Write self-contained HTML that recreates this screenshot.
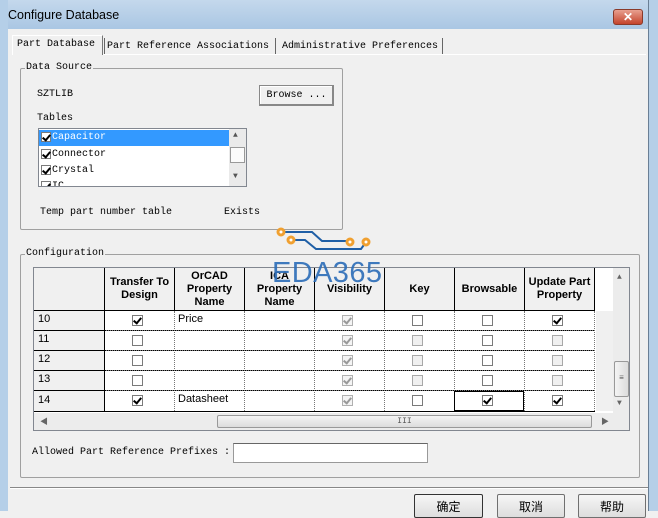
<!DOCTYPE html>
<html><head><meta charset="utf-8"><style>
*{box-sizing:border-box;margin:0;padding:0}
body{width:658px;height:511px;overflow:hidden;background:#f0f0f0;position:relative;font-family:"Liberation Mono","Noto Sans CJK SC",monospace;font-size:11px;color:#000}
.a{position:absolute}
.t{position:absolute;white-space:nowrap;font-family:"Liberation Mono",monospace;font-size:10px;letter-spacing:0px}
.grp{position:absolute;border:1px solid #a0a0a0;border-radius:2px}
.lbl{position:absolute;background:#f0f0f0;padding:0 1px;top:-7px;left:4px;font-family:"Liberation Mono",monospace;font-size:10px}
.cb{position:absolute;width:11px;height:11px;border:1px solid #7a7a7a;background:#fff}
.cb.k::after{content:"";position:absolute;left:2px;top:0px;width:3px;height:6px;border:solid #000;border-width:0 2px 2px 0;transform:rotate(40deg)}
.cb.g{border-color:#b0b0b0;background:#f4f4f4}
.cb.g::after{border-color:#999}
.cb.d{border-color:#a8a8a8;background:#f0f0f0}
.hd{position:absolute;top:0;height:43px;border-right:1px solid #000;border-bottom:1px solid #000;display:flex;align-items:center;justify-content:center;text-align:center;font-family:"Liberation Sans",sans-serif;font-weight:bold;font-size:11px;line-height:13px;background:#f0f0f0}
.sans{font-family:"Liberation Sans",sans-serif;font-size:11px}
.btn{position:absolute;border:1px solid #707070;border-radius:2px;background:linear-gradient(#f6f6f6,#dddddd);display:flex;align-items:center;justify-content:center;font-family:"Noto Sans CJK SC",sans-serif;font-size:12px}
</style></head><body>
<div class="a" style="left:0;top:0;width:658px;height:30px;background:linear-gradient(#c4d8ec,#a9c6e3)"></div>
<div class="a" style="left:0;top:0;width:8px;height:511px;background:#b5cfe8"></div>
<div class="a" style="left:648px;top:0;width:10px;height:511px;background:#b5cfe8;border-left:1px solid #6a7f95"></div>
<div class="a" style="left:8px;top:8px;font-family:'Liberation Sans',sans-serif;font-size:12.5px">Configure Database</div>
<div class="a" style="left:613px;top:9px;width:30px;height:16px;border:1px solid #8a3a2a;border-radius:3px;background:linear-gradient(#e8a090,#c4442c);color:#fff;font-family:'Liberation Sans',sans-serif;font-weight:bold;font-size:12px;text-align:center;line-height:14px">✕</div>
<div class="a" style="left:8px;top:29px;width:640px;height:482px;background:#f0f0f0"></div>
<div class="a" style="left:12px;top:54px;width:634px;height:1px;background:#fff"></div>
<div class="a" style="left:12px;top:35px;width:91px;height:20px;border:1px solid #fff;border-bottom:none;border-right:1px solid #777;background:#f0f0f0"></div>
<div class="t" style="left:17px;top:39px">Part Database</div>
<div class="a" style="left:104px;top:38px;width:1px;height:16px;background:#666"></div>
<div class="t" style="left:107px;top:41px">Part Reference Associations</div>
<div class="a" style="left:275px;top:38px;width:1px;height:16px;background:#666"></div>
<div class="t" style="left:282px;top:41px">Administrative Preferences</div>
<div class="a" style="left:442px;top:38px;width:1px;height:16px;background:#666"></div>
<div class="grp" style="left:20px;top:68px;width:323px;height:162px"><span class="lbl">Data Source</span></div>
<div class="t" style="left:37px;top:89px">SZTLIB</div>
<div class="btn" style="left:259px;top:85px;width:75px;height:21px;font-family:'Liberation Mono',monospace;font-size:10px;border-color:#888;border-radius:0;background:#f0f0f0;box-shadow:inset -1px -1px #888,inset 1px 1px #fff">Browse ...</div>
<div class="t" style="left:37px;top:113px">Tables</div>
<div class="a" style="left:38px;top:128px;width:209px;height:59px;border:1px solid #828790;background:#fff"></div>
<div class="a" style="left:39px;top:130px;width:190px;height:16px;background:#3399ff"></div>
<div class="a" style="left:229px;top:129px;width:17px;height:57px;background:#eaeaea"></div>
<div class="a" style="left:230px;top:147px;width:15px;height:16px;border:1px solid #999;background:#fbfbfb"></div>
<div class="a" style="left:233px;top:131px;font-size:8px;color:#555">▲</div>
<div class="a" style="left:233px;top:172px;font-size:8px;color:#555">▼</div>
<div class="cb k" style="left:41px;top:132px;width:10px;height:10px"></div>
<div class="t" style="left:52px;top:132px;color:#fff">Capacitor</div>
<div class="cb k" style="left:41px;top:149px;width:10px;height:10px"></div>
<div class="t" style="left:52px;top:149px">Connector</div>
<div class="cb k" style="left:41px;top:165px;width:10px;height:10px"></div>
<div class="t" style="left:52px;top:165px">Crystal</div>
<div class="a" style="left:39px;top:180px;width:190px;height:6px;overflow:hidden"><div class="cb k" style="left:2px;top:1px;width:10px;height:10px"></div><div class="t" style="left:13px;top:1px">IC</div></div>
<div class="t" style="left:40px;top:207px">Temp part number table</div>
<div class="t" style="left:224px;top:207px">Exists</div>
<div class="grp" style="left:20px;top:254px;width:620px;height:224px"><span class="lbl">Configuration</span></div>
<div class="a" style="left:33px;top:267px;width:597px;height:164px;border:1px solid #828790;background:#fff;overflow:hidden">
  <div class="hd" style="left:0;width:71px"></div>
  <div class="hd" style="left:71px;width:70px">Transfer To<br>Design</div>
  <div class="hd" style="left:141px;width:70px">OrCAD<br>Property<br>Name</div>
  <div class="hd" style="left:211px;width:70px">ICA<br>Property<br>Name</div>
  <div class="hd" style="left:281px;width:70px">Visibility</div>
  <div class="hd" style="left:351px;width:70px">Key</div>
  <div class="hd" style="left:421px;width:70px">Browsable</div>
  <div class="hd" style="left:491px;width:70px">Update Part<br>Property</div>
  <div class="a" style="left:0;top:43px;width:71px;height:100px;background:#f0f0f0;border-right:1px solid #000"></div>
  <div class="a" style="left:0;top:62px;width:561px;border-top:1px solid #000"></div>
  <div class="a" style="left:0;top:82px;width:561px;border-top:1px solid #000"></div>
  <div class="a" style="left:0;top:102px;width:561px;border-top:1px solid #000"></div>
  <div class="a" style="left:0;top:122px;width:561px;border-top:1px solid #000"></div>
  <div class="a" style="left:0;top:143px;width:561px;border-top:1px solid #000"></div>
  <div class="a" style="left:72px;top:62px;width:489px;border-top:1px dotted #777"></div>
  <div class="a" style="left:72px;top:82px;width:489px;border-top:1px dotted #777"></div>
  <div class="a" style="left:72px;top:102px;width:489px;border-top:1px dotted #777"></div>
  <div class="a" style="left:72px;top:122px;width:489px;border-top:1px dotted #777"></div>
  <div class="a" style="left:140px;top:43px;height:100px;border-left:1px dotted #777"></div>
  <div class="a" style="left:210px;top:43px;height:100px;border-left:1px dotted #777"></div>
  <div class="a" style="left:280px;top:43px;height:100px;border-left:1px dotted #777"></div>
  <div class="a" style="left:350px;top:43px;height:100px;border-left:1px dotted #777"></div>
  <div class="a" style="left:420px;top:43px;height:100px;border-left:1px dotted #777"></div>
  <div class="a" style="left:490px;top:43px;height:100px;border-left:1px dotted #777"></div>
  <div class="a" style="left:560px;top:43px;height:100px;border-left:1px dotted #777"></div>
  <div class="a" style="left:420px;top:123px;width:70px;height:20px;border:1px solid #000"></div>
  <div class="a" style="left:562px;top:43px;width:17px;height:100px;background:#f0f0f0"></div>
  <div class="a" style="left:0;top:145px;width:595px;height:17px;background:#ececec"></div>
  <div class="a" style="left:183px;top:147px;width:375px;height:13px;border:1px solid #999;border-radius:2px;background:linear-gradient(#f4f4f4,#dcdcdc);text-align:center;font-size:8px;line-height:11px;color:#555">III</div>
  <div class="a" style="left:6px;top:148px;font-size:8px;color:#666">◀</div>
  <div class="a" style="left:567px;top:148px;font-size:8px;color:#666">▶</div>
  <div class="a" style="left:579px;top:0;width:17px;height:145px;background:#ececec"></div>
  <div class="a" style="left:580px;top:93px;width:15px;height:36px;border:1px solid #999;border-radius:2px;background:linear-gradient(90deg,#f4f4f4,#dcdcdc);text-align:center;font-size:8px;line-height:34px;color:#555">≡</div>
  <div class="a" style="left:583px;top:5px;font-size:8px;color:#666">▲</div>
  <div class="a" style="left:583px;top:131px;font-size:8px;color:#666">▼</div>
</div>
<div class="sans a" style="left:38px;top:313px">10</div>
<div class="sans a" style="left:38px;top:333px">11</div>
<div class="sans a" style="left:38px;top:353px">12</div>
<div class="sans a" style="left:38px;top:373px">13</div>
<div class="sans a" style="left:38px;top:394px">14</div>
<div class="sans a" style="left:178px;top:313px">Price</div>
<div class="sans a" style="left:178px;top:393px">Datasheet</div>
<div class="cb k" style="left:132px;top:315px"></div><div class="cb" style="left:132px;top:335px"></div><div class="cb" style="left:132px;top:355px"></div><div class="cb" style="left:132px;top:375px"></div><div class="cb k" style="left:132px;top:395px"></div>
<div class="cb k g" style="left:342px;top:315px"></div><div class="cb k g" style="left:342px;top:335px"></div><div class="cb k g" style="left:342px;top:355px"></div><div class="cb k g" style="left:342px;top:375px"></div><div class="cb k g" style="left:342px;top:395px"></div>
<div class="cb" style="left:412px;top:315px"></div><div class="cb d" style="left:412px;top:335px"></div><div class="cb d" style="left:412px;top:355px"></div><div class="cb d" style="left:412px;top:375px"></div><div class="cb" style="left:412px;top:395px"></div>
<div class="cb" style="left:482px;top:315px"></div><div class="cb" style="left:482px;top:335px"></div><div class="cb" style="left:482px;top:355px"></div><div class="cb" style="left:482px;top:375px"></div><div class="cb k" style="left:482px;top:395px"></div>
<div class="cb k" style="left:552px;top:315px"></div><div class="cb d" style="left:552px;top:335px"></div><div class="cb d" style="left:552px;top:355px"></div><div class="cb d" style="left:552px;top:375px"></div><div class="cb k" style="left:552px;top:395px"></div>
<svg class="a" style="left:260px;top:222px" width="130" height="70">
<g fill="none" stroke="#1f5fa6" stroke-width="2"><path d="M21 10 H52 L62 19 H90"/><path d="M31 18 H45 L56 27 H101 L106 20"/></g>
<g fill="#fff" stroke="#f0a030" stroke-width="3"><circle cx="21" cy="10" r="3"/><circle cx="31" cy="18" r="3"/><circle cx="90" cy="20" r="3"/><circle cx="106" cy="20" r="3"/></g>
<text x="12" y="60" font-family="Liberation Sans,sans-serif" font-size="29" fill="#2f6fb8" fill-opacity="0.92" textLength="110">EDA365</text>
</svg>
<div class="t" style="left:32px;top:447px">Allowed Part Reference Prefixes :</div>
<div class="a" style="left:233px;top:443px;width:195px;height:20px;border:1px solid #999;border-top-color:#666;background:#fff"></div>
<div class="a" style="left:10px;top:487px;width:638px;height:1px;background:#888;box-shadow:0 1px #fff"></div>
<div class="btn" style="left:414px;top:494px;width:69px;height:24px;border-color:#333">确定</div>
<div class="btn" style="left:497px;top:494px;width:68px;height:24px">取消</div>
<div class="btn" style="left:578px;top:494px;width:68px;height:24px">帮助</div>
</body></html>
